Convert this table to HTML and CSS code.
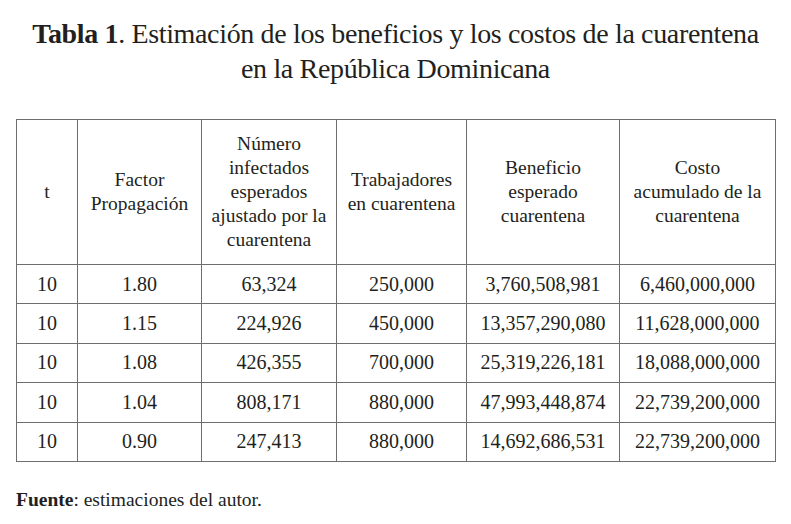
FILE: index.html
```html
<!DOCTYPE html>
<html lang="es">
<head>
<meta charset="utf-8">
<link rel="stylesheet" href="styles.css">
</head>
<body>
<div class="page">
  <h1 class="title"><b>Tabla 1</b>. Estimación de los beneficios y los costos de la cuarentena<br>en la República Dominicana</h1>
  <table class="data">
    <colgroup>
      <col class="c1"><col class="c2"><col class="c3"><col class="c4"><col class="c5"><col class="c6">
    </colgroup>
    <thead>
      <tr class="head">
        <th>t</th>
        <th>Factor<br>Propagación</th>
        <th>Número<br>infectados<br>esperados<br>ajustado por la<br>cuarentena</th>
        <th>Trabajadores<br>en cuarentena</th>
        <th>Beneficio<br>esperado<br>cuarentena</th>
        <th>Costo<br>acumulado de la<br>cuarentena</th>
      </tr>
    </thead>
    <tbody>
      <tr><td>10</td><td>1.80</td><td>63,324</td><td>250,000</td><td>3,760,508,981</td><td>6,460,000,000</td></tr>
      <tr><td>10</td><td>1.15</td><td>224,926</td><td>450,000</td><td>13,357,290,080</td><td>11,628,000,000</td></tr>
      <tr><td>10</td><td>1.08</td><td>426,355</td><td>700,000</td><td>25,319,226,181</td><td>18,088,000,000</td></tr>
      <tr><td>10</td><td>1.04</td><td>808,171</td><td>880,000</td><td>47,993,448,874</td><td>22,739,200,000</td></tr>
      <tr><td>10</td><td>0.90</td><td>247,413</td><td>880,000</td><td>14,692,686,531</td><td>22,739,200,000</td></tr>
    </tbody>
  </table>
  <p class="source"><b>Fuente</b>: estimaciones del autor.</p>
</div>
</body>
</html>
```
FILE: styles.css
```css
html, body {
  margin: 0;
  padding: 0;
  background: #ffffff;
}
body {
  font-family: "Liberation Serif", "DejaVu Serif", serif;
  color: #231f20;
}
.page {
  padding: 16px 16px 0 16px;
}
.title {
  margin: 0;
  font-family: "Liberation Serif", serif;
  font-size: 28px;
  line-height: 35px;
  font-weight: normal;
  text-align: center;
  letter-spacing: -0.35px;
}
.title b {
  font-weight: bold;
}
.data {
  margin-top: 33px;
  width: 759px;
  border-collapse: collapse;
  table-layout: fixed;
  font-family: "Liberation Serif", serif;
  font-size: 20px;
}
.c1 { width: 61px; }
.c2 { width: 124px; }
.c3 { width: 135px; }
.c4 { width: 130px; }
.c5 { width: 153px; }
.c6 { width: 156px; }
.data th, .data td {
  border: 1.5px solid #6e6e6e;
  text-align: center;
  vertical-align: middle;
  padding: 0;
  font-weight: normal;
  font-family: "Liberation Serif", serif;
  color: #231f20;
}
.data th {
  font-size: 19.5px;
  line-height: 24px;
}
.head {
  height: 145px;
}
.data tbody tr {
  height: 39.4px;
}
.source {
  margin: 27px 0 0 0;
  font-family: "Liberation Serif", serif;
  font-size: 19.5px;
  line-height: 22px;
}
```
